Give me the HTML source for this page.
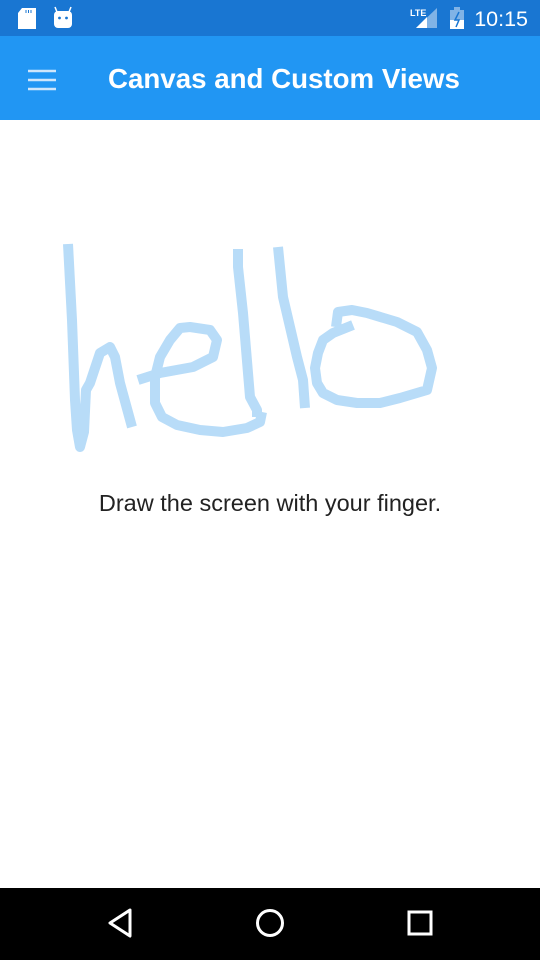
<!DOCTYPE html>
<html><head><style>
html,body{margin:0;padding:0}
body{width:540px;height:960px;position:relative;background:#fff;font-family:"Liberation Sans",Roboto,sans-serif;overflow:hidden}
.sb{position:absolute;top:0;left:0;width:540px;height:36px;background:#1976d2}
.ab{position:absolute;top:36px;left:0;width:540px;height:84px;background:#2196f3}
.title{position:absolute;left:108px;top:62px;color:#fff;font-size:27.7px;font-weight:bold;line-height:34px}
.time{position:absolute;right:12px;top:6px;color:#fff;font-size:21.5px;line-height:26px}
.msg{position:absolute;left:0;width:540px;top:490px;text-align:center;font-size:23.5px;color:#222}
.nav{position:absolute;left:0;top:888px;width:540px;height:72px;background:#000}
</style></head><body>
<div class="sb">
<svg width="540" height="36" style="position:absolute;left:0;top:0">
<path d="M22 8h14v21h-18v-16z" fill="#fff"/>
<path d="M26 10v3M28.5 10v3M31 10v3" stroke="#1976d2" stroke-width="1"/>
<rect x="54" y="11" width="18" height="17" rx="4" fill="#fff"/>
<path d="M57 12l-2-5M69 12l2-5" stroke="#fff" stroke-width="1.5"/>
<circle cx="59.5" cy="18" r="1.4" fill="#1976d2"/><circle cx="66.5" cy="18" r="1.4" fill="#1976d2"/>
<text x="410" y="16" fill="#fff" font-size="9" font-weight="bold" font-family="Liberation Sans">LTE</text>
<path d="M416 28L437 8V28z" fill="#fff" opacity=".45"/>
<path d="M416 28L427 17V28z" fill="#fff"/>
<rect x="450" y="10" width="14" height="19" fill="#fff" opacity=".45"/>
<rect x="454" y="7" width="6" height="3" fill="#fff" opacity=".45"/>
<path d="M450 20h14v9h-14z" fill="#fff"/>
<path d="M459 12l-4 8h4l-3 7" stroke="#1976d2" stroke-width="1.5" fill="none"/>
</svg>
<div class="time">10:15</div>
</div>
<div class="ab">
<svg width="60" height="84" style="position:absolute;left:0;top:0">
<path d="M28 35h28M28 44h28M28 53h28" stroke="#cfe6fb" stroke-width="2.5"/>
</svg>
</div>
<div class="title">Canvas and Custom Views</div>
<svg width="540" height="960" style="position:absolute;left:0;top:0">
<g fill="none" stroke="#b8dcf8" stroke-width="10" stroke-linejoin="round" stroke-linecap="butt">
<path d="M68 244L72 320L75 400L77 430L80 447L84 432L86 390L90 383L100 353L110 347L115 357L120 383L126 405L132 427"/>
<path d="M138 380L160 373L193 367L213 357L217 340L210 330L190 327L180 328L170 340L160 357L155 377L155 403L162 417L177 425L200 430L223 432L247 428L260 422L262 412"/>
<path d="M238 249L238 267L243 313L250 397L257 410L257 417"/>
<path d="M278 247L283 297L297 357L303 380L305 408"/>
<path d="M353 325L333 333L323 340L318 353L315 368L317 383L323 393L337 400L357 403L380 403L400 398L427 390L432 368L427 350L417 332L397 322L367 313L352 310L338 312L336 327"/>
</g>
</svg>
<div class="msg">Draw the screen with your finger.</div>
<div class="nav">
<svg width="540" height="72">
<path d="M130 22L110 35L130 48z" fill="none" stroke="#fff" stroke-width="3" stroke-linejoin="round"/>
<circle cx="270" cy="35" r="12.5" fill="none" stroke="#fff" stroke-width="3"/>
<rect x="409" y="24" width="22" height="22" fill="none" stroke="#fff" stroke-width="3"/>
</svg>
</div>
</body></html>
